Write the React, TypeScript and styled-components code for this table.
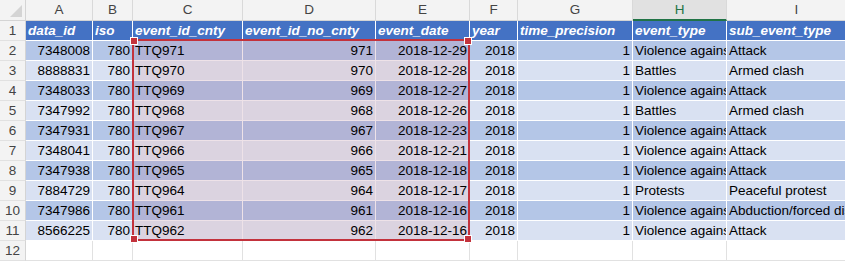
import React from 'react';
import styled, { createGlobalStyle, css } from 'styled-components';

const GlobalStyle = createGlobalStyle`
  html, body {
    margin: 0;
    padding: 0;
    background: #ffffff;
    overflow: hidden;
  }
  body {
    font-family: "Liberation Sans", Arial, sans-serif;
    font-size: 13.5px;
  }
`;

type Align = 'left' | 'right';

const columns: { letter: string; width: number; align: Align; title: string }[] = [
  { letter: 'A', width: 67, align: 'right', title: 'data_id' },
  { letter: 'B', width: 40, align: 'right', title: 'iso' },
  { letter: 'C', width: 110, align: 'left', title: 'event_id_cnty' },
  { letter: 'D', width: 133, align: 'right', title: 'event_id_no_cnty' },
  { letter: 'E', width: 94, align: 'right', title: 'event_date' },
  { letter: 'F', width: 48, align: 'right', title: 'year' },
  { letter: 'G', width: 115, align: 'right', title: 'time_precision' },
  { letter: 'H', width: 94, align: 'left', title: 'event_type' },
  { letter: 'I', width: 140, align: 'left', title: 'sub_event_type' },
];

const VAC = 'Violence against civilians';

const rows: string[][] = [
  ['7348008', '780', 'TTQ971', '971', '2018-12-29', '2018', '1', VAC, 'Attack'],
  ['8888831', '780', 'TTQ970', '970', '2018-12-28', '2018', '1', 'Battles', 'Armed clash'],
  ['7348033', '780', 'TTQ969', '969', '2018-12-27', '2018', '1', VAC, 'Attack'],
  ['7347992', '780', 'TTQ968', '968', '2018-12-26', '2018', '1', 'Battles', 'Armed clash'],
  ['7347931', '780', 'TTQ967', '967', '2018-12-23', '2018', '1', VAC, 'Attack'],
  ['7348041', '780', 'TTQ966', '966', '2018-12-21', '2018', '1', VAC, 'Attack'],
  ['7347938', '780', 'TTQ965', '965', '2018-12-18', '2018', '1', VAC, 'Attack'],
  ['7884729', '780', 'TTQ964', '964', '2018-12-17', '2018', '1', 'Protests', 'Peaceful protest'],
  ['7347986', '780', 'TTQ961', '961', '2018-12-16', '2018', '1', VAC, 'Abduction/forced disappearance'],
  ['8566225', '780', 'TTQ962', '962', '2018-12-16', '2018', '1', VAC, 'Attack'],
];

// selected block C2:E11
const selectedCols = [2, 3, 4];
const activeColumn = 'H';

export default function App() {
  return (
    <>
      <GlobalStyle />
      <Sheet>
        <Grid>
          <Corner>
            <svg width="12" height="12" viewBox="0 0 12 12">
              <polygon points="12,0 12,12 0,12" fill="#d4d4d4" />
            </svg>
          </Corner>
          {columns.map((c) => (
            <ColHeader key={c.letter} $active={c.letter === activeColumn}>
              {c.letter}
            </ColHeader>
          ))}

          <RowHeader>1</RowHeader>
          {columns.map((c) => (
            <TitleCell key={c.letter}>{c.title}</TitleCell>
          ))}

          {rows.map((r, i) => (
            <React.Fragment key={i}>
              <RowHeader>{i + 2}</RowHeader>
              {r.map((v, j) => (
                <Cell
                  key={j}
                  $align={columns[j].align}
                  $dark={i % 2 === 0}
                  $selected={selectedCols.includes(j)}
                >
                  {v}
                </Cell>
              ))}
            </React.Fragment>
          ))}

          <RowHeader>12</RowHeader>
          {columns.map((c) => (
            <EmptyCell key={c.letter} />
          ))}
        </Grid>

        <Selection>
          <Handle $x="left" $y="top" />
          <Handle $x="right" $y="top" />
          <Handle $x="left" $y="bottom" />
          <Handle $x="right" $y="bottom" />
        </Selection>
      </Sheet>
    </>
  );
}

const Sheet = styled.div`
  position: relative;
  width: 867px;
`;

const Grid = styled.div`
  display: grid;
  grid-template-columns: 26px ${columns.map((c) => `${c.width}px`).join(' ')};
  grid-template-rows: 21px;
  grid-auto-rows: 20px;
  color: #000;
`;

const Corner = styled.div`
  box-sizing: border-box;
  background: #f3f3f3;
  border-right: 1px solid #d4d4d4;
  border-bottom: 1px solid #d4d4d4;
  display: flex;
  align-items: flex-end;
  justify-content: flex-end;
  padding: 0 3px 3px 0;
`;

const ColHeader = styled.div<{ $active?: boolean }>`
  box-sizing: border-box;
  background: #f3f3f3;
  border-right: 1px solid #d9d9d9;
  border-bottom: 1px solid #d4d4d4;
  color: #444;
  text-align: center;
  line-height: 20px;

  ${(p) =>
    p.$active &&
    css`
      background: #e1e1e1;
      color: #217346;
      border-bottom: 2px solid #217346;
      line-height: 19px;
    `}
`;

const RowHeader = styled.div`
  box-sizing: border-box;
  background: #f3f3f3;
  border-right: 1px solid #d4d4d4;
  border-bottom: 1px solid #e1e1e1;
  color: #444;
  text-align: center;
  line-height: 19px;
`;

const CellBase = styled.div`
  box-sizing: border-box;
  border-right: 1px solid #ffffff;
  border-bottom: 1px solid #ffffff;
  line-height: 19px;
  padding: 0 2px 0 2px;
  white-space: nowrap;
  overflow: hidden;
`;

const TitleCell = styled(CellBase)`
  background: #4472c4;
  color: #ffffff;
  font-weight: bold;
  font-style: italic;
`;

const Cell = styled(CellBase)<{ $align: Align; $dark: boolean; $selected: boolean }>`
  text-align: ${(p) => p.$align};
  background: ${(p) => (p.$dark ? '#b4c6e7' : '#d9e1f2')};

  ${(p) =>
    p.$selected &&
    css`
      background: ${p.$dark ? '#b2b4d6' : '#dbd3e0'};
      border-color: #eee2e8;
    `}
`;

const EmptyCell = styled.div`
  box-sizing: border-box;
  border-right: 1px solid #e1e1e1;
  border-bottom: 1px solid #e1e1e1;
`;

const Selection = styled.div`
  position: absolute;
  left: 132px;
  top: 39px;
  width: 338px;
  height: 202px;
  box-sizing: border-box;
  border: 2px solid #c3323c;
  pointer-events: none;
`;

const Handle = styled.span<{ $x: 'left' | 'right'; $y: 'top' | 'bottom' }>`
  position: absolute;
  width: 6px;
  height: 6px;
  background: #c3323c;
  border: 1px solid #ffffff;
  ${(p) => (p.$x === 'left' ? 'left: -4px;' : 'right: -4px;')}
  ${(p) => (p.$y === 'top' ? 'top: -4px;' : 'bottom: -4px;')}
`;
